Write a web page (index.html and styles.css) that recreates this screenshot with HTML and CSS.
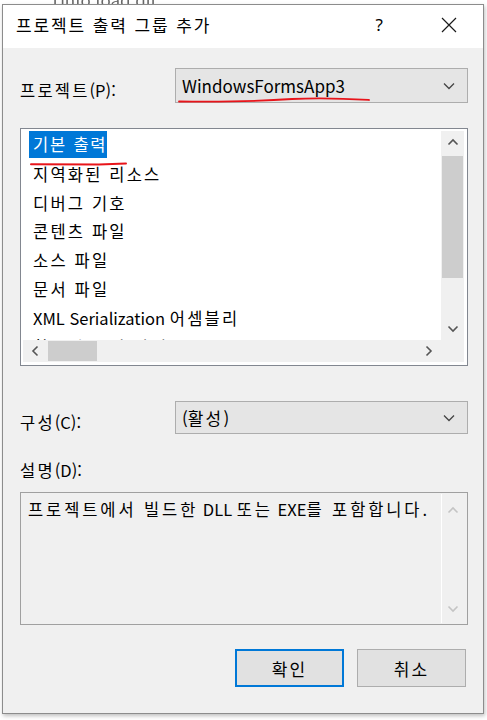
FILE: index.html
```html
<!DOCTYPE html>
<html lang="ko">
<head>
<meta charset="utf-8">
<link rel="stylesheet" href="styles.css">
</head>
<body>
<div class="backdrop-top"><span class="bg-text">Tinfo.load.dll</span></div>
<div class="dialog">
  <div class="titlebar">
    <span class="title ko">프로젝트 출력 그룹 추가</span>
    <span class="help">?</span>
    <svg class="close" width="16" height="16" viewBox="0 0 16 16"><path d="M1 1L15 15M15 1L1 15" stroke="#1a1a1a" stroke-width="1.2" fill="none"/></svg>
  </div>
  <div class="content">
    <div class="row project-row">
      <label class="label"><span class="ko">프로젝트</span>(P):</label>
      <div class="combo">
        <span class="combo-text">WindowsFormsApp3</span>
        <svg class="chev" width="12" height="8" viewBox="0 0 12 8"><path d="M1 1.5L6 6.5L11 1.5" stroke="#444" stroke-width="1.3" fill="none"/></svg>
        <svg class="annot annot-combo" width="200" height="8" viewBox="0 0 200 8"><path d="M2 5.5C40 6 80 5.5 115 3C150 1.5 175 3 192 4" stroke="#e8141a" stroke-width="1.8" fill="none" stroke-linecap="round"/></svg>
      </div>
    </div>
    <div class="listbox">
      <div class="list-items">
        <div class="item selected ko">기본 출력</div>
        <div class="item ko">지역화된 리소스</div>
        <div class="item ko">디버그 기호</div>
        <div class="item ko">콘텐츠 파일</div>
        <div class="item ko">소스 파일</div>
        <div class="item ko">문서 파일</div>
        <div class="item">XML Serialization <span class="ko">어셈블리</span></div>
        <div class="item ko">참조된 문서 파일</div>
        <svg class="annot annot-list" width="104" height="6" viewBox="0 0 104 6"><path d="M2 3.2L70 3.4L97 2.6" stroke="#e8141a" stroke-width="2" fill="none" stroke-linecap="round"/></svg>
      </div>
      <div class="vscroll">
        <svg class="arrow" width="12" height="8" viewBox="0 0 12 8"><path d="M1.5 6.5L6 2L10.5 6.5" stroke="#555" stroke-width="1.6" fill="none"/></svg>
        <div class="vtrack"><div class="vthumb"></div></div>
        <svg class="arrow" width="12" height="8" viewBox="0 0 12 8"><path d="M1.5 1.5L6 6L10.5 1.5" stroke="#555" stroke-width="1.6" fill="none"/></svg>
      </div>
      <div class="hscroll">
        <svg class="harrow" width="8" height="12" viewBox="0 0 8 12"><path d="M6.5 1.5L2 6L6.5 10.5" stroke="#555" stroke-width="1.6" fill="none"/></svg>
        <div class="htrack"><div class="hthumb"></div></div>
        <svg class="harrow" width="8" height="12" viewBox="0 0 8 12"><path d="M1.5 1.5L6 6L1.5 10.5" stroke="#555" stroke-width="1.6" fill="none"/></svg>
      </div>
      <div class="corner"></div>
    </div>
    <div class="row config-row">
      <label class="label"><span class="ko">구성</span>(C):</label>
      <div class="combo combo-small">
        <span class="combo-text">(<span class="ko">활성</span>)</span>
        <svg class="chev" width="12" height="8" viewBox="0 0 12 8"><path d="M1 1.5L6 6.5L11 1.5" stroke="#444" stroke-width="1.3" fill="none"/></svg>
      </div>
    </div>
    <label class="desc-label"><span class="ko">설명</span>(D):</label>
    <div class="descbox">
      <div class="desc-text"><span class="ko">프로젝트에서 빌드한</span> DLL <span class="ko">또는</span> EXE<span class="ko">를 포함합니다</span>.</div>
      <div class="desc-scroll">
        <svg width="12" height="8" viewBox="0 0 12 8"><path d="M1.5 6.5L6 2L10.5 6.5" stroke="#c4c4c4" stroke-width="1.6" fill="none"/></svg>
        <svg width="12" height="8" viewBox="0 0 12 8"><path d="M1.5 1.5L6 6L10.5 1.5" stroke="#c4c4c4" stroke-width="1.6" fill="none"/></svg>
      </div>
    </div>
    <div class="buttons">
      <button class="btn btn-default"><span class="ko">확인</span></button>
      <button class="btn"><span class="ko">취소</span></button>
    </div>
  </div>
</div>
</body>
</html>
```
FILE: styles.css
```css
html, body {
  margin: 0;
  padding: 0;
  background: #ffffff;
  width: 487px;
  height: 720px;
  overflow: hidden;
}
body {
  font-family: "Noto Sans CJK KR", "Noto Sans", sans-serif;
  font-size: 17px;
  color: #000;
  position: relative;
}
.ko {
  letter-spacing: 2.2px;
}
.backdrop-top {
  height: 4px;
  overflow: hidden;
  position: relative;
}
.bg-text {
  position: absolute;
  left: 50px;
  top: -13px;
  font-size: 17px;
  color: #666;
  filter: blur(0.4px);
}
.dialog {
  margin-left: 2px;
  width: 482px;
  height: 710px;
  box-sizing: border-box;
  border: 1px solid #8c8c8c;
  background: #f0f0f0;
  display: flex;
  flex-direction: column;
  box-shadow: 1px 2px 4px rgba(0,0,0,0.25);
}
.titlebar {
  height: 43px;
  box-sizing: border-box;
  flex: none;
  background: #ffffff;
  display: flex;
  align-items: center;
  padding: 0 0 4px 13px;
  position: relative;
}
.title {
  font-size: 17px;
  flex: 1;
  letter-spacing: 1.9px;
}
.help {
  font-family: "Noto Sans", sans-serif;
  font-size: 17px;
  margin-right: 58px;
}
.close {
  margin-right: 26px;
}
.content {
  padding: 20px 15px 0 17px;
  display: flex;
  flex-direction: column;
}
.row {
  display: flex;
  align-items: center;
}
.label {
  font-size: 16.5px;
  width: 155px;
  flex: none;
  padding-top: 9px;
}
.combo {
  flex: 1;
  height: 35px;
  box-sizing: border-box;
  border: 1px solid #adadad;
  background: #e5e5e5;
  display: flex;
  align-items: center;
  padding: 0 12px 0 6px;
  position: relative;
}
.combo-small {
  height: 33px;
}
.combo-text {
  flex: 1;
  font-size: 17px;
}
.annot {
  position: absolute;
  pointer-events: none;
}
.annot-combo {
  left: 1px;
  top: 27px;
}
.listbox {
  margin-top: 25px;
  height: 238px;
  box-sizing: border-box;
  border: 1px solid #828790;
  background: #ffffff;
  padding: 2px 3px 3px 2px;
  display: grid;
  grid-template-columns: 1fr 23px;
  grid-template-rows: 1fr 22px;
}
.list-items {
  overflow: hidden;
  padding: 0 0 0 6px;
  position: relative;
}
.item {
  height: 28.8px;
  line-height: 28.8px;
  font-size: 16.5px;
  padding: 0 3px 0 4px;
  white-space: nowrap;
  width: max-content;
}
.item.selected {
  height: 27px;
  line-height: 27px;
  margin-top: 0;
  margin-bottom: 1.8px;
  padding-right: 0;
  letter-spacing: 1.8px;
  background: #0078d7;
  color: #ffffff;
}
.annot-list {
  left: 6px;
  top: 30px;
}
.vscroll {
  background: #f0f0f0;
  display: flex;
  flex-direction: column;
  align-items: center;
}
.arrow {
  flex: none;
  margin: 7px 0;
}
.vtrack {
  flex: 1;
  width: 100%;
  padding-top: 3px;
}
.vthumb {
  height: 122px;
  margin: 0 1px;
  background: #cdcdcd;
}
.hscroll {
  background: #f0f0f0;
  display: flex;
  align-items: center;
}
.harrow {
  flex: none;
  margin: 0 8px;
}
.htrack {
  flex: 1;
  height: 100%;
  display: flex;
  align-items: center;
}
.hthumb {
  width: 49px;
  height: 20px;
  margin-left: 1px;
  background: #cdcdcd;
}
.corner {
  background: #f0f0f0;
}
.config-row {
  margin-top: 35px;
}
.desc-label {
  margin-top: 24px;
  display: block;
  font-size: 16.5px;
}
.descbox {
  margin-top: 10px;
  height: 133px;
  box-sizing: border-box;
  border: 1px solid #a0a0a0;
  background: #f0f0f0;
  display: flex;
}
.desc-text {
  flex: 1;
  font-size: 16.5px;
  padding: 4px 0 0 7px;
  white-space: nowrap;
}
.desc-text .ko {
  letter-spacing: 2.9px;
}
.desc-scroll {
  width: 23px;
  flex: none;
  margin: 1px 3px 1px 0;
  border-left: 1px solid #ffffff;
  display: flex;
  flex-direction: column;
  align-items: center;
  justify-content: space-between;
  padding: 12px 0 10px;
  box-sizing: border-box;
}
.buttons {
  margin-top: 24px;
  display: flex;
  justify-content: flex-end;
  gap: 13px;
  padding-right: 2px;
}
.btn {
  width: 109px;
  height: 38px;
  box-sizing: border-box;
  background: #e1e1e1;
  border: 1px solid #adadad;
  font-family: "Noto Sans CJK KR", sans-serif;
  font-size: 17px;
  color: #000;
  padding: 0;
}
.btn-default {
  border: 2px solid #0078d7;
}
```
